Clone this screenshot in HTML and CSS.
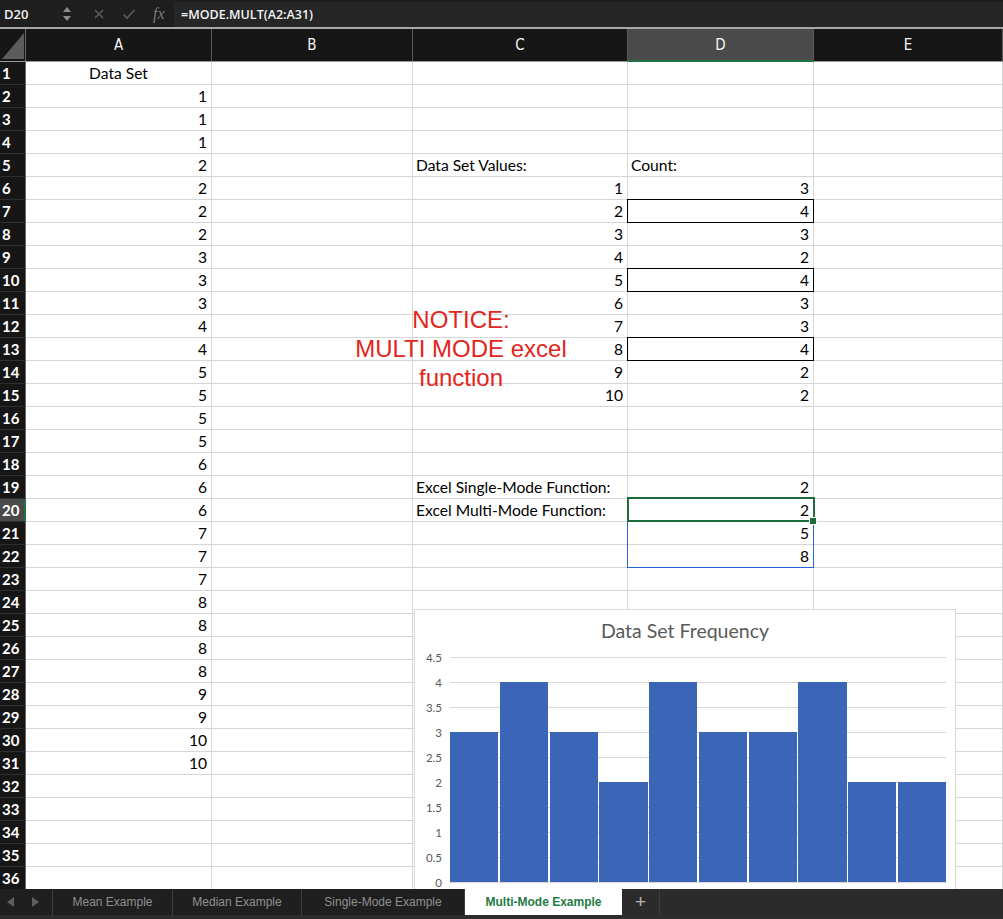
FILE: index.html
```html
<!DOCTYPE html>
<html>
<head>
<meta charset="utf-8">
<link rel="stylesheet" href="styles.css">
</head>
<body>
<div class="app">
  <div class="fbar">
    <div class="namebox">D20</div>
    <svg class="spin" width="10" height="18" viewBox="0 0 10 18"><path d="M1 7 L5 2 L9 7 Z M1 11 L5 16 L9 11 Z" fill="#8c8c8c"/></svg>
    <div class="fbtns">
      <svg width="12" height="12" viewBox="0 0 12 12"><path d="M2 2 L10 10 M10 2 L2 10" stroke="#5a5a5a" stroke-width="1.6"/></svg>
      <svg width="14" height="12" viewBox="0 0 14 12"><path d="M1.5 6.5 L5 10 L12.5 2" stroke="#5a5a5a" stroke-width="1.6" fill="none"/></svg>
      <span class="fx">fx</span>
    </div>
    <div class="formula">=MODE.MULT(A2:A31)</div>
  </div>
  <div class="sheet">
    <div class="grid">
      <div class="corner"><svg width="26" height="33" viewBox="0 0 26 33"><path d="M2 30 L24 4 L24 30 Z" fill="#5c5c5c"/></svg></div>
      <div class="ch">A</div><div class="ch">B</div><div class="ch">C</div><div class="ch sel">D</div><div class="ch">E</div>

      <div class="rh">1</div><div class="c ctr">Data Set</div><div class="c"></div><div class="c"></div><div class="c"></div><div class="c"></div>
      <div class="rh">2</div><div class="c r">1</div><div class="c"></div><div class="c"></div><div class="c"></div><div class="c"></div>
      <div class="rh">3</div><div class="c r">1</div><div class="c"></div><div class="c"></div><div class="c"></div><div class="c"></div>
      <div class="rh">4</div><div class="c r">1</div><div class="c"></div><div class="c"></div><div class="c"></div><div class="c"></div>
      <div class="rh">5</div><div class="c r">2</div><div class="c"></div><div class="c">Data Set Values:</div><div class="c">Count:</div><div class="c"></div>
      <div class="rh">6</div><div class="c r">2</div><div class="c"></div><div class="c r">1</div><div class="c r">3</div><div class="c"></div>
      <div class="rh">7</div><div class="c r">2</div><div class="c"></div><div class="c r">2</div><div class="c r boxed">4</div><div class="c"></div>
      <div class="rh">8</div><div class="c r">2</div><div class="c"></div><div class="c r">3</div><div class="c r">3</div><div class="c"></div>
      <div class="rh">9</div><div class="c r">3</div><div class="c"></div><div class="c r">4</div><div class="c r">2</div><div class="c"></div>
      <div class="rh">10</div><div class="c r">3</div><div class="c"></div><div class="c r">5</div><div class="c r boxed">4</div><div class="c"></div>
      <div class="rh">11</div><div class="c r">3</div><div class="c"></div><div class="c r">6</div><div class="c r">3</div><div class="c"></div>
      <div class="rh">12</div><div class="c r">4</div><div class="c"></div><div class="c r">7</div><div class="c r">3</div><div class="c"></div>
      <div class="rh">13</div><div class="c r">4</div><div class="c"></div><div class="c r">8</div><div class="c r boxed">4</div><div class="c"></div>
      <div class="rh">14</div><div class="c r">5</div><div class="c"></div><div class="c r">9</div><div class="c r">2</div><div class="c"></div>
      <div class="rh">15</div><div class="c r">5</div><div class="c"></div><div class="c r">10</div><div class="c r">2</div><div class="c"></div>
      <div class="rh">16</div><div class="c r">5</div><div class="c"></div><div class="c"></div><div class="c"></div><div class="c"></div>
      <div class="rh">17</div><div class="c r">5</div><div class="c"></div><div class="c"></div><div class="c"></div><div class="c"></div>
      <div class="rh">18</div><div class="c r">6</div><div class="c"></div><div class="c"></div><div class="c"></div><div class="c"></div>
      <div class="rh">19</div><div class="c r">6</div><div class="c"></div><div class="c">Excel Single-Mode Function:</div><div class="c r">2</div><div class="c"></div>
      <div class="rh active">20</div><div class="c r">6</div><div class="c"></div><div class="c">Excel Multi-Mode Function:</div><div class="c r current">2</div><div class="c"></div>
      <div class="rh">21</div><div class="c r">7</div><div class="c"></div><div class="c"></div><div class="c r spill">5</div><div class="c"></div>
      <div class="rh">22</div><div class="c r">7</div><div class="c"></div><div class="c"></div><div class="c r spill last">8</div><div class="c"></div>
      <div class="rh">23</div><div class="c r">7</div><div class="c"></div><div class="c"></div><div class="c"></div><div class="c"></div>
      <div class="rh">24</div><div class="c r">8</div><div class="c"></div><div class="c"></div><div class="c"></div><div class="c"></div>
      <div class="rh">25</div><div class="c r">8</div><div class="c"></div><div class="c"></div><div class="c"></div><div class="c"></div>
      <div class="rh">26</div><div class="c r">8</div><div class="c"></div><div class="c"></div><div class="c"></div><div class="c"></div>
      <div class="rh">27</div><div class="c r">8</div><div class="c"></div><div class="c"></div><div class="c"></div><div class="c"></div>
      <div class="rh">28</div><div class="c r">9</div><div class="c"></div><div class="c"></div><div class="c"></div><div class="c"></div>
      <div class="rh">29</div><div class="c r">9</div><div class="c"></div><div class="c"></div><div class="c"></div><div class="c"></div>
      <div class="rh">30</div><div class="c r">10</div><div class="c"></div><div class="c"></div><div class="c"></div><div class="c"></div>
      <div class="rh">31</div><div class="c r">10</div><div class="c"></div><div class="c"></div><div class="c"></div><div class="c"></div>
      <div class="rh">32</div><div class="c"></div><div class="c"></div><div class="c"></div><div class="c"></div><div class="c"></div>
      <div class="rh">33</div><div class="c"></div><div class="c"></div><div class="c"></div><div class="c"></div><div class="c"></div>
      <div class="rh">34</div><div class="c"></div><div class="c"></div><div class="c"></div><div class="c"></div><div class="c"></div>
      <div class="rh">35</div><div class="c"></div><div class="c"></div><div class="c"></div><div class="c"></div><div class="c"></div>
      <div class="rh">36</div><div class="c"></div><div class="c"></div><div class="c"></div><div class="c"></div><div class="c"></div>
    </div>

    <div class="notice">NOTICE:<br>MULTI MODE excel<br>function</div>

    <div class="chart">
      <div class="chart-title">Data Set Frequency</div>
      <div class="chart-body">
        <div class="yaxis">
          <span>4.5</span><span>4</span><span>3.5</span><span>3</span><span>2.5</span><span>2</span><span>1.5</span><span>1</span><span>0.5</span><span>0</span>
        </div>
        <div class="plot">
          <div class="bar" style="height:150px"></div>
          <div class="bar" style="height:200px"></div>
          <div class="bar" style="height:150px"></div>
          <div class="bar" style="height:100px"></div>
          <div class="bar" style="height:200px"></div>
          <div class="bar" style="height:150px"></div>
          <div class="bar" style="height:150px"></div>
          <div class="bar" style="height:200px"></div>
          <div class="bar" style="height:100px"></div>
          <div class="bar" style="height:100px"></div>
        </div>
      </div>
    </div>
  </div>
  <div class="tabs">
    <div class="nav">
      <svg width="8" height="10" viewBox="0 0 8 10"><path d="M7 0 L0 5 L7 10 Z" fill="#5e5e5e"/></svg>
      <svg width="8" height="10" viewBox="0 0 8 10"><path d="M1 0 L8 5 L1 10 Z" fill="#5e5e5e"/></svg>
    </div>
    <div class="tab t1">Mean Example</div>
    <div class="tab t2">Median Example</div>
    <div class="tab t3">Single-Mode Example</div>
    <div class="tab t4 on">Multi-Mode Example</div>
    <div class="tab plus">+</div>
    <div class="rest"></div>
  </div>
</div>
</body>
</html>
```
FILE: styles.css
```css
* { box-sizing: border-box; }
html, body { margin: 0; padding: 0; background: #1b1b1b; }
.app {
  width: 1003px;
  height: 919px;
  display: flex;
  flex-direction: column;
  overflow: hidden;
}
.fbar {
  height: 29px;
  flex: none;
  background: #1e1e1e;
  border-bottom: 2px solid #a7a7a7;
  display: flex;
  align-items: center;
  font-family: "Open Sans", sans-serif;
  color: #f2f2f2;
}
.namebox {
  width: 62px;
  padding-left: 4px;
  font-size: 13px;
  font-weight: 600;
}
.fbtns {
  display: flex;
  align-items: center;
  gap: 17px;
  margin-left: 21px;
  width: 81px;
}
.fx {
  font-family: "Liberation Serif", serif;
  font-style: italic;
  font-size: 16px;
  color: #7a7a7a;
}
.formula {
  flex: 1;
  align-self: stretch;
  margin: 2px 0 0 0;
  background: #262626;
  padding-left: 7px;
  font-size: 12.5px;
  font-weight: 600;
  line-height: 25px;
}
.sheet {
  position: relative;
  flex: 1;
  overflow: hidden;
  background: #ffffff;
}
.grid {
  display: grid;
  grid-template-columns: 26px 186px 201px 215px 186px 189px;
  grid-template-rows: 33px;
  grid-auto-rows: 23px;
  font-family: "Lato", "Open Sans", sans-serif;
  font-size: 15.6px;
  color: #000;
}
.corner {
  background: #161616;
  border-right: 1px solid #6a6a6a;
  border-bottom: 1px solid #9a9a9a;
}
.corner svg { display: block; }
.ch {
  background: #161616;
  color: #f4f4f4;
  border-right: 1px solid #5a5a5a;
  border-bottom: 1px solid #9a9a9a;
  font-family: "DejaVu Sans Condensed", "Liberation Sans Narrow", sans-serif;
  font-size: 15px;
  display: flex;
  align-items: center;
  justify-content: center;
}
.ch.sel {
  background: #4a4a4a;
  border-bottom: 2px solid #217346;
}
.rh {
  background: #161616;
  color: #ffffff;
  font-weight: 700;
  font-size: 15px;
  padding-left: 2px;
  line-height: 22px;
  border-right: 1px solid #6a6a6a;
  border-bottom: 1px solid #2e2e2e;
}
.rh.active {
  background: #4a4a4a;
  border-right: 2px solid #217346;
}
.c {
  position: relative;
  border-right: 1px solid #d6d6d6;
  border-bottom: 1px solid #d6d6d6;
  padding: 0 3px;
  line-height: 22px;
  white-space: nowrap;
}
.c.r { text-align: right; padding-right: 4px; }
.c.ctr { text-align: center; }
.c.boxed::after {
  content: "";
  position: absolute;
  top: -1px; left: -1px; right: -1px; bottom: -1px;
  border: 1px solid #000;
}
.c.current::after {
  content: "";
  position: absolute;
  top: -2px; left: -1px; right: -2px; bottom: -1px;
  border: 2px solid #1e6b3c;
  z-index: 2;
}
.c.current::before {
  content: "";
  position: absolute;
  right: -4px; bottom: -4px;
  width: 6px; height: 6px;
  background: #1e6b3c;
  border: 1px solid #fff;
  z-index: 3;
}
.c.spill::after {
  content: "";
  position: absolute;
  top: -1px; left: -1px; right: -1px; bottom: 0;
  border-left: 1px solid #2563d8;
  border-right: 1px solid #2563d8;
}
.c.spill.last::after {
  bottom: -1px;
  border-bottom: 1px solid #2563d8;
}
.notice {
  position: absolute;
  left: 311px;
  top: 276px;
  width: 300px;
  text-align: center;
  font-family: "Liberation Sans", Arial, sans-serif;
  font-size: 24px;
  line-height: 29px;
  color: #e2261d;
}
.chart {
  position: absolute;
  left: 414px;
  top: 580px;
  width: 542px;
  height: 300px;
  background: #fff;
  border: 1px solid #d9d9d9;
  font-family: "Lato", "Open Sans", sans-serif;
  color: #595959;
}
.chart-title {
  text-align: center;
  font-size: 19.5px;
  line-height: 22px;
  margin-top: 10px;
}
.chart-body {
  display: flex;
  margin-top: 15px;
}
.yaxis {
  width: 27px;
  margin-top: -12px;
  margin-right: 8px;
  display: flex;
  flex-direction: column;
  align-items: flex-end;
  font-size: 11.5px;
}
.yaxis span {
  height: 25px;
  line-height: 25px;
}
.plot {
  width: 496px;
  height: 226px;
  display: flex;
  align-items: flex-end;
  gap: 1.5px;
  border-top: 1px solid #d9d9d9;
  border-bottom: 1px solid #d9d9d9;
  background: repeating-linear-gradient(to bottom, transparent 0, transparent 24px, #d9d9d9 24px, #d9d9d9 25px);
}
.bar {
  flex: 1;
  background: #3b66b7;
}
.tabs {
  height: 30px;
  flex: none;
  display: flex;
  background: #1f1f1f;
  border-bottom: 4px solid #2d2d2d;
  font-family: "Liberation Sans", Arial, sans-serif;
  font-size: 12px;
  color: #8f8f8f;
}
.nav {
  width: 53px;
  display: flex;
  align-items: center;
  gap: 16px;
  padding-left: 7px;
  border-right: 1px solid #3e3e3e;
}
.tab {
  display: flex;
  align-items: center;
  justify-content: center;
  border-right: 1px solid #3e3e3e;
}
.t1 { width: 120px; }
.t2 { width: 129px; }
.t3 { width: 163px; }
.t4 { width: 157px; }
.tab.on {
  background: #ffffff;
  color: #1e7b45;
  font-weight: 700;
  border-right: none;
}
.plus {
  width: 38px;
  font-size: 19px;
  color: #b8b8b8;
  background: #2b2b2b;
}
.rest { flex: 1; background: #2b2b2b; }
```
